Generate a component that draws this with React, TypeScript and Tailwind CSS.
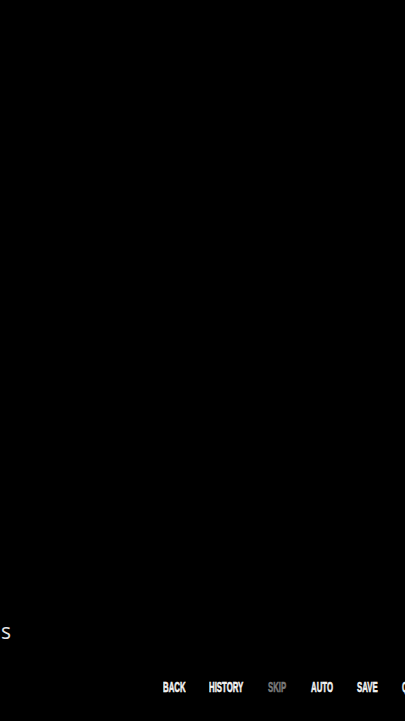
const items = [
  { label: "Back", width: "w-[22px]", muted: false },
  { label: "History", width: "w-[35px]", muted: false },
  { label: "Skip", width: "w-[19px]", muted: true },
  { label: "Auto", width: "w-[22px]", muted: false },
  { label: "Save", width: "w-[21px]", muted: false },
  { label: "Q.Save", width: "w-[34px]", muted: false },
];

function QuickMenu() {
  return (
    <div className="flex gap-[24px] pl-[163px] whitespace-nowrap">
      {items.map((item) => (
        <div key={item.label} className={`${item.width} shrink-0 h-[15px] flex`}>
          <span
            className={`block origin-left scale-x-[0.52] font-['Liberation_Sans',sans-serif] text-[15px] leading-[15px] font-bold uppercase [-webkit-text-stroke:0.6px_currentColor] ${
              item.muted ? "text-[#787878]" : "text-[#f2f2f2]"
            }`}
          >
            {item.label}
          </span>
        </div>
      ))}
    </div>
  );
}

export default function App() {
  return (
    <div className="h-[721px] w-full bg-black overflow-hidden flex flex-col justify-end pb-[27px]">
      {/* dialogue text, clipped at the left edge */}
      <div className="h-[21px] pl-px font-['Open_Sans',sans-serif] font-normal text-[21px] leading-[21px] text-[#e6e6e6]">
        s
      </div>
      <div className="h-[37px]" />
      <QuickMenu />
    </div>
  );
}
